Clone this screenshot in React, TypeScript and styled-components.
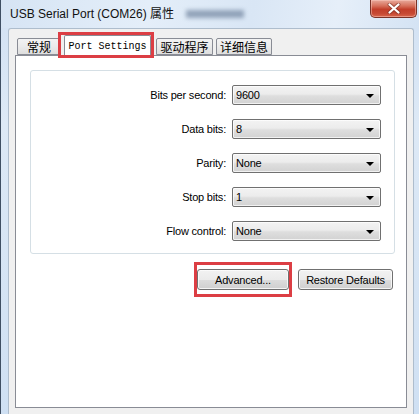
import React from "react";
import styled, { createGlobalStyle } from "styled-components";

const GlobalStyle = createGlobalStyle`
  html, body { margin: 0; padding: 0; }
  body {
    width: 419px;
    height: 414px;
    overflow: hidden;
    font-family: "Liberation Sans", Arial, "Noto Sans CJK SC", sans-serif;
    background: #ffffff;
  }
  * { box-sizing: border-box; }
`;

const Window = styled.div`
  width: 419px;
  height: 414px;
  display: flex;
  flex-direction: column;
  background: linear-gradient(180deg, #d2e1f3 0%, #dde9f6 30%, #cfe0f3 100%);
  border-left: 1px solid #3f4f63;
  overflow: hidden;
`;

const TitleBar = styled.div`
  height: 28px;
  flex: none;
  display: flex;
  align-items: flex-start;
  padding-left: 9px;
  background: linear-gradient(100deg, #d6e4f4 0%, #e4eef9 35%, #d9e6f5 60%, #e6eff9 80%, #d4e3f4 100%);
`;

const Title = styled.span`
  margin-top: 7px;
  font-size: 12px;
  line-height: 15px;
  color: #111;
  white-space: nowrap;
  font-family: "Liberation Sans", Arial, "Noto Sans CJK SC", sans-serif;
`;

const Blurred = styled.span`
  margin-top: 10px;
  margin-left: 12px;
  width: 58px;
  height: 8px;
  background: #71859f;
  opacity: 0.7;
  filter: blur(2px);
`;

const CloseButton = styled.div`
  margin-left: auto;
  margin-right: 2px;
  width: 47px;
  height: 18px;
  border: 1px solid #7a3328;
  border-top: none;
  border-radius: 0 0 5px 5px;
  background: linear-gradient(180deg, #e8aa9c 0%, #d66f5a 35%, #c23e2a 55%, #c74a34 80%, #d9664c 100%);
  box-shadow: inset 0 0 0 1px rgba(255, 210, 200, 0.45);
  display: flex;
  align-items: center;
  justify-content: center;
`;

const Body = styled.div`
  flex: 1;
  margin: 0 5px 0 7px;
  display: flex;
  flex-direction: column;
  background: #f0f0f0;
  border: 1px solid #aebdcd;
  border-bottom: none;
  border-radius: 3px 3px 0 0;
  padding: 0 6px 6px 6px;
`;

const TabStrip = styled.div`
  height: 26px;
  flex: none;
  display: flex;
  align-items: flex-end;
  padding-left: 1px;
  position: relative;
  z-index: 1;
`;

const Tab = styled.div<{ $w: number; $gap: number; $selected?: boolean }>`
  width: ${(p) => p.$w}px;
  margin-left: ${(p) => p.$gap}px;
  height: ${(p) => (p.$selected ? 22 : 17)}px;
  margin-bottom: ${(p) => (p.$selected ? -2 : 0)}px;
  border: 1px solid #898c95;
  border-bottom: ${(p) => (p.$selected ? "none" : "1px solid #898c95")};
  border-radius: 2px 2px 0 0;
  background: ${(p) =>
    p.$selected ? "#ffffff" : "linear-gradient(180deg, #f3f3f3 0%, #ebebeb 50%, #dedede 100%)"};
  display: flex;
  align-items: center;
  justify-content: center;
  font-family: ${(p) =>
    p.$selected
      ? '"Liberation Mono", "Courier New", monospace'
      : '"Noto Sans CJK SC", "Liberation Sans", sans-serif'};
  font-size: ${(p) => (p.$selected ? 10 : 12)}px;
  line-height: 14px;
  padding-top: ${(p) => (p.$selected ? 0 : 1)}px;
  color: #000;
  white-space: nowrap;
`;

const Highlight = styled.div<{ $inset: string }>`
  position: relative;
  display: flex;
  align-items: flex-end;
  &::after {
    content: "";
    position: absolute;
    inset: ${(p) => p.$inset};
    border: 3px solid #dc3e44;
    pointer-events: none;
  }
`;

const TabPage = styled.div`
  flex: 1;
  background: #ffffff;
  border: 1px solid #898c95;
  padding: 14px 11px 0 14px;
  display: flex;
  flex-direction: column;
`;

const GroupBox = styled.div`
  border: 1px solid #d5dfe5;
  border-radius: 3px;
  padding: 14px 13px 12px 0;
  display: grid;
  grid-template-columns: 1fr 149px;
  grid-auto-rows: 20px;
  column-gap: 6px;
  row-gap: 14px;
  align-items: center;
`;

const Label = styled.span`
  text-align: right;
  font-size: 11px;
  letter-spacing: -0.2px;
  color: #000;
  white-space: nowrap;
`;

const Combo = styled.div`
  height: 20px;
  border: 1px solid #707070;
  border-radius: 2px;
  background: linear-gradient(180deg, #f3f3f3 0%, #ececec 45%, #dedede 55%, #d2d2d2 100%);
  box-shadow: inset 0 0 0 1px rgba(255, 255, 255, 0.7);
  display: flex;
  align-items: center;
  justify-content: space-between;
  padding: 0 6px 0 3px;
  font-size: 11px;
  letter-spacing: -0.2px;
  color: #000;
`;

const Arrow = styled.span`
  width: 0;
  height: 0;
  border-left: 4px solid transparent;
  border-right: 4px solid transparent;
  border-top: 4px solid #000;
  margin-top: 1px;
`;

const ButtonRow = styled.div`
  margin-top: 15px;
  padding-right: 2px;
  display: flex;
  justify-content: flex-end;
  align-items: center;
  gap: 9px;
`;

const Button = styled.div<{ $w: number }>`
  width: ${(p) => p.$w}px;
  height: 21px;
  border: 1px solid #707070;
  border-radius: 3px;
  background: linear-gradient(180deg, #f2f2f2 0%, #ebebeb 50%, #dddddd 50%, #cfcfcf 100%);
  box-shadow: inset 0 0 0 1px rgba(252, 252, 252, 0.8);
  display: flex;
  align-items: center;
  justify-content: center;
  font-size: 11px;
  letter-spacing: -0.2px;
  color: #000;
  white-space: nowrap;
`;

const rows: [string, string][] = [
  ["Bits per second:", "9600"],
  ["Data bits:", "8"],
  ["Parity:", "None"],
  ["Stop bits:", "1"],
  ["Flow control:", "None"],
];

export default function App() {
  return (
    <>
      <GlobalStyle />
      <Window>
        <TitleBar>
          <Title>USB Serial Port (COM26) 属性</Title>
          <Blurred />
          <CloseButton>
            <svg width="14" height="11" viewBox="0 0 14 11">
              <path d="M2.5 1.5 L11.5 9.5 M11.5 1.5 L2.5 9.5" stroke="#6e2a20" strokeWidth="4" strokeLinecap="round" opacity="0.55" />
              <path d="M2.5 1.5 L11.5 9.5 M11.5 1.5 L2.5 9.5" stroke="#ffffff" strokeWidth="2.2" strokeLinecap="round" />
            </svg>
          </CloseButton>
        </TitleBar>
        <Body>
          <TabStrip>
            <Tab $w={44} $gap={1}>常规</Tab>
            <Highlight $inset="-3px">
              <Tab $w={87} $gap={3} $selected>Port Settings</Tab>
            </Highlight>
            <Tab $w={57} $gap={5}>驱动程序</Tab>
            <Tab $w={56} $gap={3}>详细信息</Tab>
          </TabStrip>
          <TabPage>
            <GroupBox>
              {rows.map(([label, value]) => (
                <React.Fragment key={label}>
                  <Label>{label}</Label>
                  <Combo>
                    <span>{value}</span>
                    <Arrow />
                  </Combo>
                </React.Fragment>
              ))}
            </GroupBox>
            <ButtonRow>
              <Highlight $inset="-7px -3px">
                <Button $w={92}>Advanced...</Button>
              </Highlight>
              <Button $w={95}>Restore Defaults</Button>
            </ButtonRow>
          </TabPage>
        </Body>
      </Window>
    </>
  );
}
